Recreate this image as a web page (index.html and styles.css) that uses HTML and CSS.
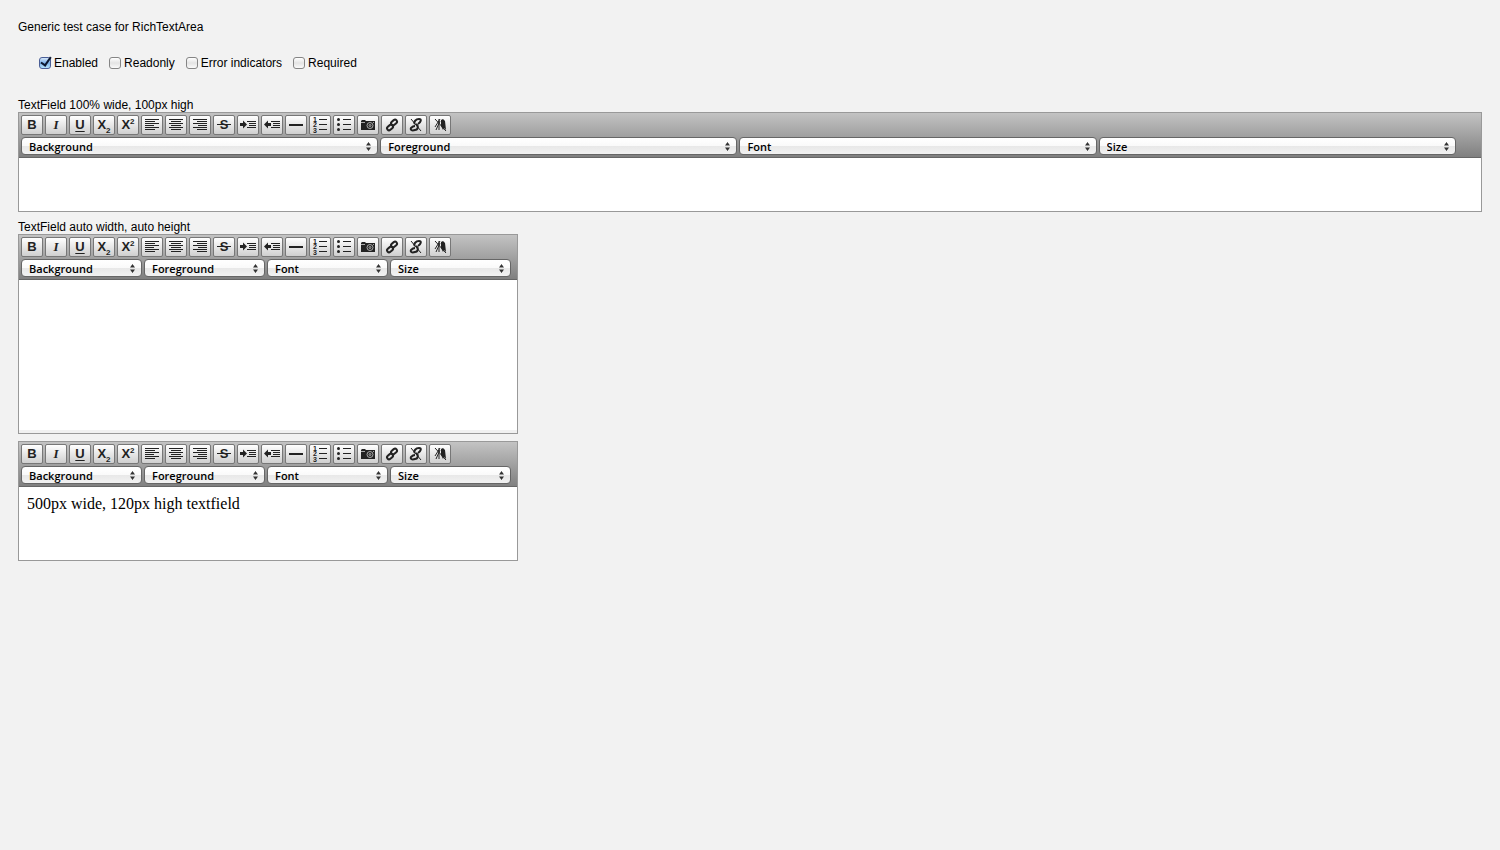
FILE: index.html
```html
<!DOCTYPE html>
<html lang="en">
<head>
<meta charset="utf-8">
<title>RichTextArea test</title>
<link rel="stylesheet" href="styles.css">
<script src="editor.js" defer></script>
</head>
<body>
<svg class="sprites" aria-hidden="true">
  <symbol id="left" viewBox="0 1 20 18"><path d="M3 4.500h14M3 6.500h10M3 8.500h14M3 10.500h9M3 12.500h14M3 14.500h10"/></symbol>
  <symbol id="center" viewBox="0 1 20 18"><path d="M3 4.500h14M5 6.500h10M3 8.500h14M5 10.500h10M3 12.500h14M5 14.500h10"/></symbol>
  <symbol id="right" viewBox="0 1 20 18"><path d="M3 4.500h14M7 6.500h10M3 8.500h14M8 10.500h9M3 12.500h14M7 14.500h10"/></symbol>
  <symbol id="strike" viewBox="0 1 20 18"><text x="10" y="14" class="letter">S</text><path d="M3 9.500h14"/></symbol>
  <symbol id="indent" viewBox="0 1 20 18"><path d="M9 6.500h9M11 8.500h7M11 10.500h7M9 12.500h9"/><path class="solid" d="M2 8h3V5.500l4 4-4 4V11H2z"/></symbol>
  <symbol id="outdent" viewBox="0 1 20 18"><path d="M9 6.500h9M11 8.500h7M11 10.500h7M9 12.500h9"/><path class="solid" d="M9 8H6V5.500l-4 4 4 4V11h3z"/></symbol>
  <symbol id="rule" viewBox="0 1 20 18"><path class="thick" d="M3 10h14"/></symbol>
  <symbol id="ol" viewBox="0 1 20 18"><path d="M9 4.500h8M9 9.500h8M9 14.500h8"/><text x="5" y="7" class="digit">1</text><text x="5" y="12" class="digit">2</text><text x="5" y="18" class="digit">3</text></symbol>
  <symbol id="ul" viewBox="0 1 20 18"><path d="M9 4.500h8M9 9.500h8M9 14.500h8"/><circle class="solid" cx="4.500" cy="4.500" r="1.500"/><circle class="solid" cx="4.500" cy="9.500" r="1.500"/><circle class="solid" cx="4.500" cy="14.500" r="1.500"/></symbol>
  <symbol id="camera" viewBox="0 1 20 18"><path class="solid" d="M3 6l1-1h3l1 1h9v9H3z"/><circle cx="12" cy="10.500" r="3" class="lens"/><circle cx="12" cy="10.500" r="1" class="lens"/><path class="lens" d="M3 7.500h4M15 7.500h1"/></symbol>
  <symbol id="link" viewBox="0 1 20 18"><g class="chain"><rect x="8.800" y="5.500" width="6.500" height="4" rx="2" transform="rotate(-40 12 7.500)"/><rect x="4.800" y="10.500" width="6.500" height="4" rx="2" transform="rotate(-40 8 12.500)"/></g></symbol>
  <symbol id="unlink" viewBox="0 1 20 18"><g class="chain"><path d="M9 9c-2-2 1-5 4-5 3 0 2 3-1 5M10 9c3 2 2 6-1 6-3 1-5 0-4-2 1-1 2-2 4-2"/></g><path d="M5 4l10 12"/></symbol>
  <symbol id="clear" viewBox="0 1 20 18"><path d="M5 4l11 12M5 12l5-8M6 15l4-9M9 4v11"/><path class="solid" d="M11 5l2-1 2 2 1 9-2-2-1 2-2-4z"/></symbol>
</svg>

<template id="toolbar">
  <div class="toolbar">
    <div class="buttons">
      <button type="button" title="Bold">B</button>
      <button type="button" title="Italic" class="italic">I</button>
      <button type="button" title="Underline" class="underline">U</button>
      <button type="button" title="Subscript">X<sub>2</sub></button>
      <button type="button" title="Superscript">X<sup>2</sup></button>
      <button type="button" title="Align left"><svg><use href="#left"/></svg></button>
      <button type="button" title="Center"><svg><use href="#center"/></svg></button>
      <button type="button" title="Align right"><svg><use href="#right"/></svg></button>
      <button type="button" title="Strikethrough"><svg><use href="#strike"/></svg></button>
      <button type="button" title="Indent"><svg><use href="#indent"/></svg></button>
      <button type="button" title="Outdent"><svg><use href="#outdent"/></svg></button>
      <button type="button" title="Horizontal rule"><svg><use href="#rule"/></svg></button>
      <button type="button" title="Ordered list"><svg><use href="#ol"/></svg></button>
      <button type="button" title="Bulleted list"><svg><use href="#ul"/></svg></button>
      <button type="button" title="Insert image"><svg><use href="#camera"/></svg></button>
      <button type="button" title="Create link"><svg><use href="#link"/></svg></button>
      <button type="button" title="Remove link"><svg><use href="#unlink"/></svg></button>
      <button type="button" title="Remove formatting"><svg><use href="#clear"/></svg></button>
    </div>
    <div class="selects">
      <select aria-label="Background"><option>Background</option></select>
      <select aria-label="Foreground"><option>Foreground</option></select>
      <select aria-label="Font"><option>Font</option></select>
      <select aria-label="Size"><option>Size</option></select>
    </div>
  </div>
</template>

<main class="page">
  <p class="intro">Generic test case for RichTextArea</p>
  <div class="options">
    <label><input type="checkbox" checked>Enabled</label>
    <label><input type="checkbox">Readonly</label>
    <label><input type="checkbox">Error indicators</label>
    <label><input type="checkbox">Required</label>
  </div>
  <section class="field">
    <div class="caption" id="caption-full">TextField 100% wide, 100px high</div>
    <div class="editor editor-full">
      <div class="content" contenteditable="true" role="textbox" aria-labelledby="caption-full"></div>
    </div>
  </section>
  <section class="field">
    <div class="caption" id="caption-auto">TextField auto width, auto height</div>
    <div class="editor editor-auto">
      <div class="content" contenteditable="true" role="textbox" aria-labelledby="caption-auto"></div>
    </div>
  </section>
  <section class="field">
    <div class="editor editor-fixed">
      <div class="content" contenteditable="true" role="textbox" aria-label="Text">500px wide, 120px high textfield</div>
    </div>
  </section>
</main>
</body>
</html>
```

FILE: editor.js
```js
const toolbar = document.getElementById("toolbar");
for (const editor of document.querySelectorAll(".editor")) {
  editor.prepend(toolbar.content.cloneNode(true));
}
```

FILE: styles.css
```css
*, *::after { box-sizing: border-box; }
body {
  margin: 0;
  background: #f2f2f2;
  color: #000;
  font: 12px/16px "Liberation Sans", Arial, sans-serif;
}
.sprites { display: none; }
.page { padding: 19px 18px; }
.intro { margin: 0 0 20px; }
.options { display: flex; gap: 11px; padding-left: 21px; margin-bottom: 26px; }
.options label { display: flex; align-items: center; gap: 3px; }
.options input {
  appearance: none;
  width: 12px;
  height: 12px;
  margin: 0;
  border: 1px solid #858585;
  border-radius: 3px;
  background: linear-gradient(#fff, #e4e4e4 50%, #fafafa);
}
.options input:checked {
  border-color: #4a5e96;
  background: linear-gradient(#d5e6f8, #7db2ea 50%, #b5e2fc);
  position: relative;
}
.options input:checked::after {
  content: "";
  position: absolute;
  left: 3px;
  top: -3px;
  width: 6px;
  height: 11px;
  border: solid #0c1730;
  border-width: 0 2px 2px 0;
  transform: rotate(35deg);
}
.field { margin-bottom: 7px; }
.caption { padding-top: 1px; line-height: 14px; }
.editor {
  display: flex;
  flex-direction: column;
  border: 1px solid #999;
  background: #fff;
}
.editor-full { height: 100px; }
.editor-auto { width: 500px; height: 200px; }
.editor-fixed { width: 500px; height: 120px; }
.toolbar {
  display: flex;
  flex-direction: column;
  gap: 2px;
  padding: 2px;
  border-bottom: 1px solid #666;
  background: linear-gradient(#c3c3c3, #808080);
}
.buttons, .selects { display: flex; gap: 2px; }
.buttons button {
  flex: none;
  width: 22px;
  height: 20px;
  padding: 0;
  border: 1px solid #777;
  border-radius: 2px;
  background: linear-gradient(#fff, #cfcfcf);
  color: #222;
  font: bold 13px/18px "Liberation Sans", Arial, sans-serif;
  text-align: center;
}
.buttons .italic { font-family: "Liberation Serif", serif; font-style: italic; }
.buttons .underline { text-decoration: underline; text-underline-offset: 2px; }
.buttons sub, .buttons sup { font-size: 8px; line-height: 1px; }
.buttons svg {
  display: block;
  width: 20px;
  height: 18px;
  fill: none;
  stroke: #222;
}
.solid { fill: #222; stroke: none; }
.thick { stroke-width: 2px; }
.letter, .digit {
  fill: #222;
  stroke: none;
  font-weight: bold;
  text-anchor: middle;
}
.letter { font-size: 13px; }
.digit { font-size: 7px; }
.lens { stroke: #aaa; }
.chain { stroke-width: 2px; }
.selects select {
  appearance: none;
  flex: none;
  width: 24.5%;
  height: 18px;
  margin: 0;
  padding: 0 16px 0 7px;
  border: 1px solid #666;
  border-radius: 4px;
  color: #000;
  font: 600 11px/15px "Open Sans", "Noto Sans", sans-serif;
  background:
    url("data:image/svg+xml,%3Csvg xmlns='http://www.w3.org/2000/svg' width='5' height='9'%3E%3Cpath fill='%23333' d='M0 3.500L2.500 0 5 3.500zM0 5.500L2.500 9 5 5.500z'/%3E%3C/svg%3E") right 6px center no-repeat,
    linear-gradient(#fff 0%, #fafafa 48%, #e8e8e8 52%, #f2f2f2 100%);
}
.content {
  flex: 1;
  padding: 8px;
  font: 16px/18px "Liberation Serif", "Times New Roman", serif;
  outline: none;
}
.editor-auto .content { border-bottom: 3px solid #f1f1f1; }
```
